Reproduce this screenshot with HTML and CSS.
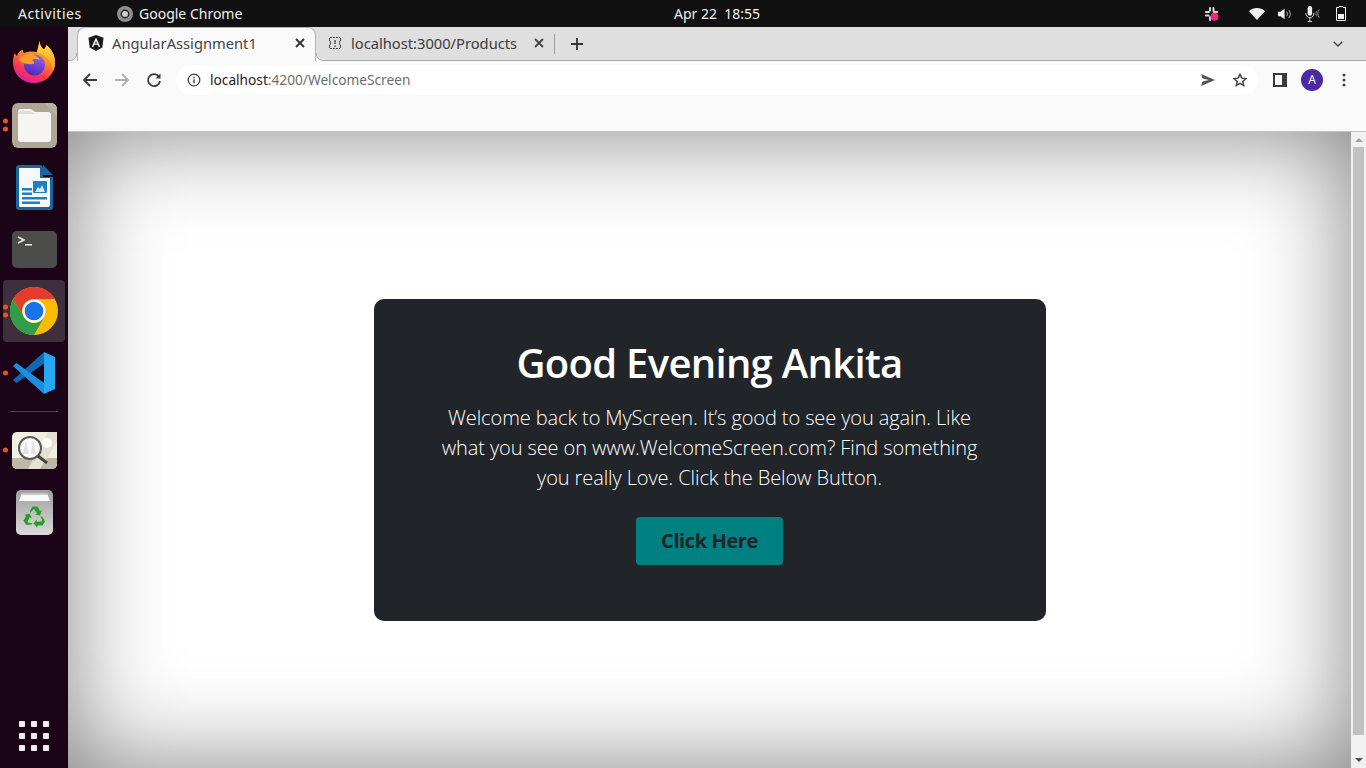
FILE: index.html
```html
<!DOCTYPE html>
<html lang="en">
<head>
<meta charset="utf-8">
<title>AngularAssignment1</title>
<link rel="stylesheet" href="styles.css">
</head>
<body>
<header class="topbar">
  <span class="activities">Activities</span>
  <span class="appname">
    <svg class="app-ico" viewBox="0 0 16 16"><circle cx="8" cy="8" r="8" fill="#8f8f8f"/><circle cx="8" cy="8" r="4.400" fill="#222"/><circle cx="8" cy="8" r="3" fill="#cfcfcf"/></svg>
    Google Chrome
  </span>
  <time class="clock">Apr 22&nbsp;&nbsp;18:55</time>
  <div class="tray">
    <svg class="t-slack" viewBox="0 0 16 16"><g fill="#dcdcdc"><rect x="1" y="5" width="5" height="2" rx="1"/><rect x="1" y="8.500" width="4.500" height="2" rx="1"/><rect x="5" y="1" width="2" height="4.500" rx="1"/><rect x="8.500" y="1" width="2" height="5" rx="1"/><rect x="9" y="5" width="5" height="2" rx="1"/><rect x="5" y="10" width="2" height="5" rx="1"/></g><circle cx="10.500" cy="10.800" r="4" fill="#ee2a7b"/></svg>
    <svg class="t-wifi" viewBox="0 0 16 12"><path d="M0 3.200C2 1.200 5 0 8 0s6 1.200 8 3.200L8 12z" fill="#f2f2f2"/></svg>
    <svg class="t-vol" viewBox="0 0 16 14"><path d="M0 4.500h3L7.500 1v12L3 9.500H0z" fill="#f2f2f2"/><path d="M10 4.500c1 1.500 1 3.500 0 5M12.500 2.500c2 2.500 2 6.500 0 9" fill="none" stroke="#bbb" stroke-width="1"/></svg>
    <svg class="t-mic" viewBox="0 0 18 18"><rect x="3" y="0" width="5" height="11" rx="2.500" fill="#f2f2f2"/><path d="M1 8c0 3.500 2 5 4.500 5s4.500-1.500 4.500-5M5.500 13v4M3 17.500h5" fill="none" stroke="#f2f2f2" stroke-width="1"/><path d="M13 6c-1 1.500-1 3.500 0 5M16 4c-2 2.500-2 6.500 0 9" fill="none" stroke="#aaa" stroke-width="1"/></svg>
    <svg class="t-bat" viewBox="0 0 10 15"><path d="M3 .5h4v1h2.500v13H.5v-13H3z" fill="none" stroke="#f2f2f2"/><rect x="2" y="8" width="6" height="5" fill="#f2f2f2"/></svg>
  </div>
</header>

<div class="desktop">
  <nav class="dock">
    <div class="dock-item">
      <svg class="i-firefox" viewBox="0 0 42 43">
        <defs>
          <linearGradient id="ffa" x1="0.75" y1="0" x2="0.3" y2="1"><stop offset="0" stop-color="#ffc928"/><stop offset=".4" stop-color="#ff8a28"/><stop offset=".72" stop-color="#ff3750"/><stop offset="1" stop-color="#d920a0"/></linearGradient>
          <linearGradient id="ffb" x1="0.7" y1="0" x2="0.3" y2="1"><stop offset="0" stop-color="#9a62ea"/><stop offset="1" stop-color="#4527bd"/></linearGradient>
          <linearGradient id="ffc" x1="0" y1="0" x2="0" y2="1"><stop offset="0" stop-color="#ffe13c"/><stop offset="1" stop-color="#ff9a22"/></linearGradient>
        </defs>
        <path d="M27 1c-.5 3.500 1 6 3.500 8.500 1.500-1 2.500-2.500 3-4.500C38.500 9.500 42 15 42 22.500 42 34 33 43 21 43S0 34 0 22c0-3.500.7-6.500 2-9 .5 1.500 1 2.500 2 3 .8-3 3-5.500 6-6.500-.3 1.500 0 2.800 1 3.800 4-2.300 9-2.300 13-1 .8-3.500 1.500-7 3-11.300z" fill="url(#ffa)"/>
        <path d="M27 1c-.5 3.500 1 6 3.500 8.500 1.500-1 2.500-2.500 3-4.500C38.500 9.500 42 15 42 22.500c0 3-.6 5.800-1.700 8.300C39 25 36 16 24 12.300 24.800 8.800 25.500 5.300 27 1z" fill="url(#ffc)"/>
        <circle cx="21.500" cy="25" r="10.500" fill="url(#ffb)"/>
        <path d="M5.500 19.500c3-3.500 8-5.500 12.500-5 4 .4 7.500 2.200 8.500 5.500-3-1.500-6-1-7.500 0 1.500 1 2.500 2 2 3.500-4 1.500-12 .5-15.500-4z" fill="#ff9f2a"/>
      </svg>
    </div>
    <div class="dock-item">
      <i class="pips"><b></b><b></b></i>
      <svg class="i-files" viewBox="0 0 45 45"><rect width="45" height="45" rx="6" fill="#aea795"/><path d="M45 6v8L33 0h6a6 6 0 0 1 6 6z" fill="#b8b2a2"/><path d="M6 9a3 3 0 0 1 3-3h10l4 3h13a3 3 0 0 1 3 3v24a3 3 0 0 1-3 3H9a3 3 0 0 1-3-3z" fill="#f7f5f1"/><path d="M6 11a3 3 0 0 1 3-3h10l4 3z" fill="#e0ddd5"/></svg>
    </div>
    <div class="dock-item">
      <svg class="i-writer" viewBox="0 0 37 45"><path d="M3 0h22l2 2v10h10v30a3 3 0 0 1-3 3H3a3 3 0 0 1-3-3V3a3 3 0 0 1 3-3z" fill="#17669f"/><path d="M3 3h21v10h10v27a2 2 0 0 1-2 2H4a1 1 0 0 1-1-1z" fill="#f6f8fa"/><path d="M27 0l10 10H27z" fill="#17669f"/><rect x="6" y="23" width="10" height="2.500" fill="#1f80bd"/><rect x="6" y="27.500" width="10" height="2.500" fill="#1f80bd"/><rect x="6" y="32" width="25" height="2.500" fill="#1f80bd"/><rect x="6" y="36.500" width="18" height="2.500" fill="#1f80bd"/><rect x="17" y="16" width="14" height="12" rx="1" fill="#1f80bd"/><path d="M19 27l3-5 2 2 2-4 3 7z" fill="#d8ecf8"/></svg>
    </div>
    <div class="dock-item">
      <svg class="i-term" viewBox="0 0 45 37"><rect width="45" height="37" rx="5" fill="#4c4c4a"/><path d="M6 6l6 3-6 3" fill="none" stroke="#eee" stroke-width="1.500"/><rect x="13" y="13" width="7" height="1.500" fill="#eee"/></svg>
    </div>
    <div class="dock-item is-active">
      <i class="pips"><b></b><b></b></i>
      <svg class="i-chrome" viewBox="0 0 48 48">
        <circle cx="24" cy="24" r="24" fill="#fbbc04"/>
        <path d="M3.200 12A24 24 0 0 1 44.800 12H24A12 12 0 0 0 13.600 30z" fill="#e33b2e"/>
        <path d="M3.200 12L13.600 30A12 12 0 0 0 34.400 30L24 48A24 24 0 0 1 3.200 12z" fill="#2f9e4a"/>
        <circle cx="24" cy="24" r="11.500" fill="#fff"/><circle cx="24" cy="24" r="9.300" fill="#1a73e8"/>
      </svg>
    </div>
    <div class="dock-item">
      <i class="pips"><b></b></i>
      <svg class="i-code" viewBox="0 0 42 42"><path d="M31 0V11.500L3.500 31 0 28z" fill="#0e6ab2"/><path d="M3.500 11L31 31V42L0 14z" fill="#1b8fe0"/><path d="M31 0l11 5v32l-11 5z" fill="#27a6f2"/></svg>
    </div>
    <div class="dock-sep"></div>
    <div class="dock-item">
      <i class="pips"><b></b></i>
      <svg class="i-mag" viewBox="0 0 45 37"><rect width="45" height="37" rx="5" fill="#f1eee4"/><path d="M0 26h45v6a5 5 0 0 1-5 5H5a5 5 0 0 1-5-5z" fill="#bdb8a8"/><path d="M36 0l9 0v10L28 37H16z" fill="#e4e0d2"/><circle cx="35" cy="11" r="5" fill="#fff"/><circle cx="18" cy="16" r="11" fill="#fafafa" stroke="#5a5a5a" stroke-width="2"/><path d="M14 8l-3 14h6zM21 7l-2 15h5z" fill="#e2e2e2"/><path d="M26 24l9 7" stroke="#444" stroke-width="3"/></svg>
    </div>
    <div class="dock-item">
      <svg class="i-trash" viewBox="0 0 37 45"><defs><linearGradient id="tr" x1="0" y1="0" x2="0" y2="1"><stop offset="0" stop-color="#9f9f9f"/><stop offset="1" stop-color="#dadada"/></linearGradient><path id="rc" d="M14 21l2.500-4.500h5L24 21l2-1-2 5.500-5-1 2-1-2.500-4h-1.500l-2.500 3.500z"/></defs><rect width="37" height="45" rx="5" fill="url(#tr)"/><path d="M6 3h25l3 8H3z" fill="#fafafa"/><rect x="6" y="3" width="25" height="2" fill="#c8c8c8"/><g fill="#2e9b27"><use href="#rc"/><use href="#rc" transform="rotate(120 18.500 27.500)"/><use href="#rc" transform="rotate(240 18.500 27.500)"/></g></svg>
    </div>
    <div class="dock-grid">
      <b></b><b></b><b></b><b></b><b></b><b></b><b></b><b></b><b></b>
    </div>
  </nav>

  <main class="browser">
    <div class="tabstrip">
      <div class="tab tab-active">
        <svg class="fav" viewBox="0 0 16 16"><path d="M8 0l7.500 2.700-1.200 9.900L8 16l-6.300-3.400L.5 2.700z" fill="#1a1a1a"/><path d="M8 2.500L3.700 12h1.600l.9-2.200h3.600l.9 2.200h1.600zM8 6l1.200 2.600H6.800z" fill="#fff"/></svg>
        <span class="tab-title">AngularAssignment1</span>
        <svg class="tab-x" viewBox="0 0 10 10"><path d="M1 1l8 8M9 1l-8 8" stroke="#333" stroke-width="1.800"/></svg>
      </div>
      <div class="tab tab-other">
        <svg class="fav" viewBox="0 0 16 16"><path d="M3 2.500h10M3 13.500h10" stroke="#444" stroke-dasharray="2 1" fill="none"/><path d="M2.500 3v3c1 0 1 .5 1 2s0 2-1 2v3M13.500 3v3c-1 0-1 .5-1 2s0 2 1 2v3" fill="none" stroke="#444"/><path d="M8 5v4M8 10.500v1.500" stroke="#444" stroke-width="1.300"/></svg>
        <span class="tab-title">localhost:3000/Products</span>
        <svg class="tab-x" viewBox="0 0 10 10"><path d="M1 1l8 8M9 1l-8 8" stroke="#444" stroke-width="1.800"/></svg>
      </div>
      <span class="tab-divider"></span>
      <svg class="tab-plus" viewBox="0 0 12 12"><path d="M6 0v12M0 6h12" stroke="#333" stroke-width="1.800"/></svg>
      <svg class="tab-chev" viewBox="0 0 10 6"><path d="M.7.7L5 5l4.300-4.300" fill="none" stroke="#444" stroke-width="1.400"/></svg>
    </div>

    <div class="toolbar">
      <button class="tb"><svg viewBox="0 0 16 16"><path d="M15 8H2M8 2L2 8l6 6" fill="none" stroke="#3c3c3c" stroke-width="1.800"/></svg></button>
      <button class="tb"><svg viewBox="0 0 16 16"><path d="M1 8h13M8 2l6 6-6 6" fill="none" stroke="#b0b0b0" stroke-width="1.800"/></svg></button>
      <button class="tb"><svg viewBox="0 0 16 16"><path d="M13.200 5A6 6 0 1 0 14 9" fill="none" stroke="#3c3c3c" stroke-width="1.800"/><path d="M14.500 1.500v5h-5z" fill="#3c3c3c"/></svg></button>
      <div class="omnibox">
        <svg class="ob-info" viewBox="0 0 14 14"><circle cx="7" cy="7" r="5.800" fill="none" stroke="#444" stroke-width="1.300"/><path d="M7 6.200v4M7 3.700v1.500" stroke="#444" stroke-width="1.400"/></svg>
        <span class="url"><span class="url-host">localhost</span>:4200/WelcomeScreen</span>
        <svg class="ob-send" viewBox="0 0 14 12"><path d="M0 0l14 6L0 12l1.500-4.500L8 6 1.500 4.500z" fill="#555"/></svg>
        <svg class="ob-star" viewBox="0 0 16 16"><path d="M8 1.500l2 4.400 4.800.5-3.600 3.200 1 4.700L8 11.900l-4.200 2.400 1-4.700L1.200 6.400 6 5.900z" fill="none" stroke="#444" stroke-width="1.700"/></svg>
      </div>
      <button class="tb tb-panel"><svg viewBox="0 0 14 14"><rect width="14" height="14" fill="#3c3c3c"/><rect x="2" y="2" width="7" height="10" fill="#fafafa"/></svg></button>
      <button class="tb"><span class="avatar">A</span></button>
      <button class="tb"><svg class="dots" viewBox="0 0 4 14"><circle cx="2" cy="2" r="1.500" fill="#444"/><circle cx="2" cy="7" r="1.500" fill="#444"/><circle cx="2" cy="12" r="1.500" fill="#444"/></svg></button>
    </div>
    <div class="bookmarks"></div>

    <div class="viewport">
      <div class="page">
        <section class="card">
          <h1 class="card-title">Good Evening Ankita</h1>
          <p class="card-lead">Welcome back to MyScreen. It’s good to see you again. Like<br>what you see on www.WelcomeScreen.com? Find something<br>you really Love. Click the Below Button.</p>
          <a class="card-btn">Click Here</a>
        </section>
      </div>
      <div class="scrollbar">
        <span class="arrow-up"></span>
        <span class="thumb"></span>
        <span class="arrow-down"></span>
      </div>
    </div>
  </main>
</div>
</body>
</html>
```
FILE: styles.css
```css
* { box-sizing: border-box; }
html, body { margin: 0; padding: 0; width: 1366px; height: 768px; overflow: hidden; }
body { font-family: "Open Sans", "Noto Sans", "Liberation Sans", sans-serif; display: flex; flex-direction: column; background: #fff; }

.topbar { height: 27px; flex: none; background: #111; color: #f0f0f0; display: flex; align-items: center; font-size: 14px; font-family: "Noto Sans", sans-serif; }
.activities { margin-left: 18px; width: 99px; letter-spacing: .55px; }
.appname { display: flex; align-items: center; gap: 6px; width: 557px; white-space: nowrap; }
.app-ico { width: 16px; height: 16px; }
.clock { white-space: pre; }
.tray { margin-left: auto; display: flex; align-items: center; }
.t-slack { width: 16px; height: 16px; margin-right: 29px; }
.t-wifi { width: 16px; height: 12px; margin-right: 13px; }
.t-vol { width: 14px; height: 14px; margin-right: 13px; }
.t-mic { width: 16px; height: 18px; margin-right: 15px; }
.t-bat { width: 10px; height: 15px; margin-right: 20px; }

.desktop { flex: 1; display: flex; min-height: 0; }

.dock { width: 68px; flex: none; background: #1b0318; padding: 5px 3px 0; display: flex; flex-direction: column; align-items: stretch; }
.dock-item { height: 62px; flex: none; display: flex; align-items: center; justify-content: center; position: relative; border-radius: 4px; }
.is-active { background: #3f2e3e; }
.pips { position: absolute; left: 0; top: 50%; transform: translateY(-50%); display: flex; flex-direction: column; gap: 3px; font-style: normal; }
.pips b { display: block; width: 5px; height: 5px; border-radius: 50%; background: #e95420; }
.dock-sep { height: 15px; flex: none; position: relative; margin: 0 7px; }
.dock-sep::after { content: ""; display: block; height: 1px; margin-top: 7px; background: #4f3d4e; }
.dock-grid { margin: auto 0 17px 16px; width: 30px; height: 30px; display: grid; grid-template-columns: repeat(3, 6px); grid-auto-rows: 6px; gap: 6px; }
.dock-grid b { background: #f0eeee; border-radius: 1px; }
.i-firefox { width: 42px; height: 43px; margin-bottom: 4px; }
.i-files { width: 45px; height: 45px; }
.i-writer { width: 37px; height: 45px; }
.i-term { width: 45px; height: 37px; }
.i-chrome { width: 48px; height: 48px; }
.i-code { width: 42px; height: 42px; }
.i-mag { width: 45px; height: 37px; }
.i-trash { width: 37px; height: 45px; }

.browser { flex: 1; min-width: 0; display: flex; flex-direction: column; }
.tabstrip { height: 34px; flex: none; background: #dfdfdf; border-bottom: 1px solid #a8a8a8; display: flex; align-items: flex-start; padding-left: 9px; position: relative; }
.tab { width: 239px; height: 33px; display: flex; align-items: center; padding: 0 11px 2px 11px; font-size: 14.700px; font-family: "Noto Sans", sans-serif; color: #3c3c3c; flex: none; }
.tab-active { background: #fafafa; border: 1px solid #b5b5b5; border-bottom: 0; border-radius: 8px 8px 0 0; height: 34px; color: #444; position: relative; z-index: 1; padding: 0 10px 3px 10px; }
.tab-active::before, .tab-active::after { content: ""; position: absolute; bottom: 0; width: 8px; height: 8px; }
.tab-active::before { left: -9px; background: radial-gradient(circle at 0 0, #dfdfdf 7px, #b5b5b5 7.500px, #b5b5b5 8px, #fafafa 8.500px); }
.tab-active::after { right: -9px; background: radial-gradient(circle at 100% 0, #dfdfdf 7px, #b5b5b5 7.500px, #b5b5b5 8px, #fafafa 8.500px); }
.fav { width: 16px; height: 16px; flex: none; }
.tab-title { margin-left: 8px; flex: 1; white-space: nowrap; }
.tab-x { width: 10px; height: 10px; flex: none; }
.tab-divider { width: 1px; height: 20px; background: #9c9c9c; margin: 7px 0 0 -1px; flex: none; }
.tab-plus { width: 12px; height: 12px; margin: 11px 0 0 16px; flex: none; }
.tab-chev { width: 10px; height: 6px; margin: 14px 23px 0 auto; flex: none; }

.toolbar { height: 37px; flex: none; background: #fafafa; display: flex; align-items: center; padding: 0 6px; gap: 0; }
.tb { width: 32px; height: 32px; border: 0; padding: 0; background: none; display: flex; align-items: center; justify-content: center; flex: none; }
.tb svg { width: 16px; height: 16px; }
.tb-panel { margin-left: 6px; }
.tb-panel svg { width: 14px; height: 14px; }
.tb .dots { width: 4px; height: 14px; }
.avatar { width: 22px; height: 22px; border-radius: 50%; background: #4c2aa5; color: #fff; font-size: 12px; display: flex; align-items: center; justify-content: center; font-family: "Noto Sans", sans-serif; }
.omnibox { width: 1082px; height: 30px; margin-left: 6px; flex: none; background: #fff; border-radius: 15px; display: flex; align-items: center; padding: 0 11px 0 11px; font-family: "Noto Sans", sans-serif; font-size: 13.700px; color: #6e6e6e; }
.ob-info { width: 14px; height: 14px; flex: none; }
.url { margin-left: 9px; flex: 1; white-space: nowrap; }
.url-host { color: #222; }
.ob-send { width: 14px; height: 12px; flex: none; margin-right: 18px; }
.ob-star { width: 14px; height: 14px; flex: none; }

.bookmarks { flex: none; background: #fafafa; border-bottom: 1px solid #c4c4c4; height: 34px; }

.viewport { flex: 1; min-height: 0; display: flex; }
.page { flex: 1; display: flex; align-items: center; justify-content: center; padding-top: 20px; box-shadow: inset 0 0 100px gray; background: #fff; }
.card { width: 672px; height: 322px; background: #212529; border-radius: 10px; color: #fff; text-align: center; padding: 40px 1px 0 0; margin-left: 1px; }
.card-title { margin: 0; font-size: 40px; line-height: 48px; font-weight: 600; letter-spacing: -.7px; }
.card-lead { margin: 16px 0 24px; font-size: 20px; line-height: 30px; font-weight: 300; letter-spacing: -.1px; }
.card-btn { display: inline-block; width: 147px; height: 48px; background: #008080; color: #212529; border-radius: 4px; font-size: 20px; line-height: 48px; font-weight: 700; letter-spacing: -.4px; }

.scrollbar { width: 15px; flex: none; background: #f1f1f1; display: flex; flex-direction: column; align-items: center; padding: 6px 0; }
.thumb { width: 11px; flex: 1; background: #c1c1c1; margin: 5px 0 23px; }
.arrow-up { width: 0; height: 0; border: 4px solid transparent; border-top: 0; border-bottom: 4px solid #a3a3a3; }
.arrow-down { width: 0; height: 0; border: 4px solid transparent; border-bottom: 0; border-top: 4px solid #505050; }
```
